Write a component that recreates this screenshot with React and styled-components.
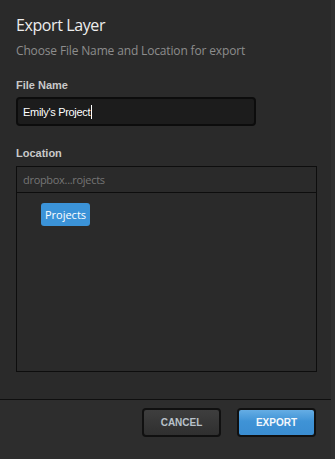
import React from "react"
import styled, { createGlobalStyle } from "styled-components"

const GlobalStyle = createGlobalStyle`
  html, body {
    margin: 0;
    padding: 0;
    background: #303030;
  }
  * {
    box-sizing: border-box;
  }
`

const ExportDialog = () => {
  return (
    <Dialog>
      <GlobalStyle />
      <Body>
        <Title>Export Layer</Title>
        <Subtitle>Choose File Name and Location for export</Subtitle>

        <FieldLabel>File Name</FieldLabel>
        <NameInput>
          Emily's Project
          <Caret />
        </NameInput>

        <FieldLabel $gap={20}>Location</FieldLabel>
        <LocationBox>
          <PathRow>dropbox...rojects</PathRow>
          <FolderList>
            <FolderChip>Projects</FolderChip>
          </FolderList>
        </LocationBox>
      </Body>

      <Footer>
        <Button>CANCEL</Button>
        <Button $primary>EXPORT</Button>
      </Footer>
    </Dialog>
  )
}

export default ExportDialog

const Dialog = styled.div`
  width: 331px;
  height: 459px;
  display: flex;
  flex-direction: column;
  background: #2a2a2a;
  font-family: "Open Sans", "Liberation Sans", sans-serif;
`

const Body = styled.div`
  flex: 1;
  display: flex;
  flex-direction: column;
  padding: 15px 15px 0 16px;
`

const Title = styled.h1`
  margin: 0;
  font-size: 16px;
  line-height: 20px;
  font-weight: 400;
  letter-spacing: -0.4px;
  color: #ededed;
`

const Subtitle = styled.p`
  margin: 8px 0 0;
  font-size: 12px;
  line-height: 16px;
  letter-spacing: -0.15px;
  color: #8d8d8d;
`

const FieldLabel = styled.label`
  display: block;
  margin-top: ${p => p.$gap || 19}px;
  font-family: "Liberation Sans", Arial, sans-serif;
  font-size: 11px;
  line-height: 14px;
  font-weight: 700;
  color: #c9c9c9;
`

const NameInput = styled.div`
  margin-top: 5px;
  width: 240px;
  height: 29px;
  display: flex;
  align-items: center;
  padding: 0 5px;
  background: #1c1c1c;
  border: 2px solid #0c0c0c;
  border-radius: 4px;
  font-family: "Liberation Sans", Arial, sans-serif;
  font-size: 11px;
  letter-spacing: -0.3px;
  color: #ffffff;
`

const Caret = styled.span`
  display: inline-block;
  width: 1px;
  height: 14px;
  margin-left: 1px;
  background: #ffffff;
`

const LocationBox = styled.div`
  margin-top: 6px;
  width: 301px;
  height: 206px;
  display: flex;
  flex-direction: column;
  border: 1px solid #0d0d0d;
`

const PathRow = styled.div`
  height: 26px;
  display: flex;
  align-items: center;
  padding: 0 6px;
  border-bottom: 1px solid #0d0d0d;
  font-size: 11px;
  letter-spacing: -0.3px;
  color: #757575;
`

const FolderList = styled.div`
  flex: 1;
  display: flex;
  flex-direction: column;
  align-items: flex-start;
  padding: 10px 24px;
`

const FolderChip = styled.div`
  width: 49px;
  height: 23px;
  display: flex;
  align-items: center;
  justify-content: center;
  background: #3b93d8;
  border-radius: 3px;
  font-size: 11px;
  color: #ffffff;
`

const Footer = styled.div`
  height: 60px;
  display: flex;
  justify-content: flex-end;
  align-items: flex-start;
  gap: 16px;
  padding: 8px 15px 0 0;
  background: #2d2d2d;
  border-top: 1px solid #0f0f0f;
`

const Button = styled.button`
  width: 79px;
  height: 29px;
  padding: 0;
  border: 2px solid #101010;
  border-radius: 4px;
  background: ${p =>
    p.$primary
      ? "linear-gradient(#65ade4, #3f93d6 45%, #3a8dd1)"
      : "linear-gradient(#3e3e3e, #2f2f2f)"};
  color: ${p => (p.$primary ? "#f4f8fc" : "#b9c1c9")};
  font-family: "Liberation Sans", Arial, sans-serif;
  font-size: 10px;
  font-weight: 700;
  cursor: pointer;
`
